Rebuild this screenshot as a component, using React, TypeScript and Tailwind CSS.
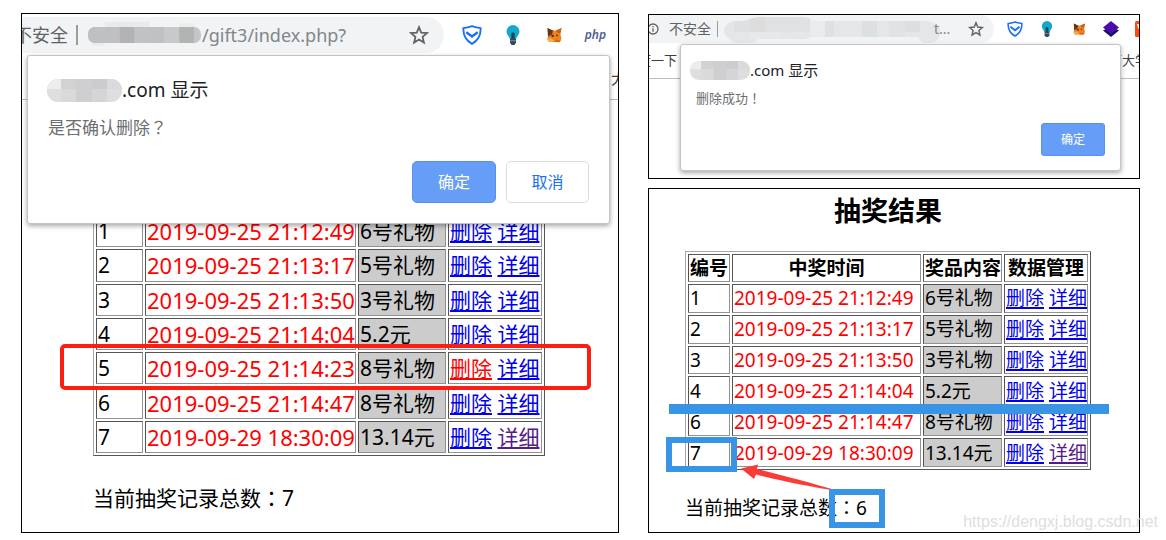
import type { ReactNode } from 'react';
import clsx from 'clsx';

type PrizeRecord = {
  id: number;
  time: string;
  prize: string;
  active?: boolean;
  visited?: boolean;
};

const records: PrizeRecord[] = [
  { id: 1, time: '2019-09-25 21:12:49', prize: '6号礼物' },
  { id: 2, time: '2019-09-25 21:13:17', prize: '5号礼物' },
  { id: 3, time: '2019-09-25 21:13:50', prize: '3号礼物' },
  { id: 4, time: '2019-09-25 21:14:04', prize: '5.2元' },
  { id: 5, time: '2019-09-25 21:14:23', prize: '8号礼物', active: true },
  { id: 6, time: '2019-09-25 21:14:47', prize: '8号礼物' },
  { id: 7, time: '2019-09-29 18:30:09', prize: '13.14元', visited: true },
];

const remaining = records.filter((record) => record.id !== 5);

function StarIcon({ className }: { className: string }) {
  return (
    <svg className={className} viewBox="0 0 20 20" fill="none" stroke="#5f6368" strokeWidth="1.8">
      <path d="M10 2.2l2.2 5.4 5.8.5-4.4 3.8 1.3 5.7-4.9-3-4.9 3 1.3-5.7L2 8.1l5.8-.5z" />
    </svg>
  );
}

function ShieldIcon({ className }: { className: string }) {
  return (
    <svg className={className} viewBox="0 0 20 20" fill="none" stroke="#1a6ff5" strokeWidth="1.9">
      <path d="M10 1.2c3 1.100 5.500 1.700 8.600 1.900.3 6.300-2.600 12.400-8.600 15.700C4 15.500 1.100 9.400 1.400 3.100 4.500 2.900 7 2.300 10 1.200z" />
      <path d="M4.300 7.200L10 11.500l5.700-4.300" strokeWidth="2.400" />
    </svg>
  );
}

function BulbIcon({ className }: { className: string }) {
  return (
    <svg className={className} viewBox="0 0 20 20">
      <path d="M10 0a6.500 6.500 0 0 0-6.500 6.500c0 3.200 2.600 4.600 3.300 7.300h6.400c.7-2.700 3.300-4.100 3.300-7.300A6.500 6.500 0 0 0 10 0z" fill="#11a9cc" />
      <path d="M10 7.500a2 2 0 0 0-1.500 3.300L8 14h4l-.5-3.200A2 2 0 0 0 10 7.500z" fill="#24445c" />
      <path d="M7 13.500h6v4.300L11.500 20h-3L7 17.800z" fill="#34495e" />
      <path d="M7 15.700h6" stroke="#8aa0b0" strokeWidth=".8" />
    </svg>
  );
}

function FoxIcon({ className }: { className: string }) {
  return (
    <svg className={className} viewBox="0 0 20 20">
      <path d="M3.500 3l4.500 2.500h4L17.500 3l-1.200 5.500 1.200 5.500-2 3H5l-1.500-3.500L4 10z" fill="#ee8420" />
      <path d="M3.500 3L9 5.500l-1 4-4 2z" fill="#6b3512" />
      <path d="M17.500 3L12 5.500l1.500 2.500 3 .5z" fill="#c65f13" />
      <path d="M7 10.500l2.500-1 .5 2-2 .7zM12 9.500l2.500.7-1.800 1.500z" fill="#5b2d10" />
      <path d="M3 14l4-1 3 2.500-2 1.500H4.500z" fill="#f6ab57" />
      <path d="M12 14.500l5 1-1.500 1.700-5-.2z" fill="#d56a15" />
    </svg>
  );
}

function LayersIcon({ className }: { className: string }) {
  return (
    <svg className={className} viewBox="0 0 16 16">
      <path d="M8 5.500l8 4-8 6.500-8-6.500z" fill="#1d0e63" />
      <path d="M8 0l8 6.500L8 13 0 6.500z" fill="#4a0cb0" />
    </svg>
  );
}

function RedIcon({ className }: { className: string }) {
  return (
    <svg className={className} viewBox="0 0 16 16">
      <rect width="16" height="16" rx="1.500" fill="#ff4713" />
      <path d="M2 3h8L7 9v5H5V9L3 7z" fill="#fff" />
      <path d="M5 4.500h3l-1 2z" fill="#ff4713" />
    </svg>
  );
}

function InfoIcon({ className }: { className: string }) {
  return (
    <svg className={className} viewBox="0 0 12 12" fill="none" stroke="#5f6368" strokeWidth="1.300">
      <circle cx="6" cy="6" r="5" />
      <path d="M6 5.200v3.500M6 3v1.200" />
    </svg>
  );
}

// Censored host names, drawn as pixelated strokes
function HostBlurLarge() {
  return (
    <svg className="h-[28px] w-[115px] shrink-0" viewBox="0 0 116 28">
      <path d="M18 1h45v5H18z" fill="#e9eaeb" />
      <path d="M93 2h15v4H93z" fill="#eceded" />
      <path d="M5 21h12v4H5z" fill="#e8edea" />
      <clipPath id="host-large">
        <rect x="1" y="6" width="114" height="16" rx="7" />
      </clipPath>
      <g clipPath="url(#host-large)">
        <rect width="116" height="28" fill="#c4c5c7" />
        <rect x="1" width="17" height="28" fill="#bec0c2" />
        <rect x="18" width="15" height="28" fill="#c0bfc1" />
        <rect x="33" width="15" height="28" fill="#b3b2b7" />
        <rect x="48" width="15" height="28" fill="#c0c2c5" />
        <rect x="63" width="15" height="28" fill="#bec2c5" />
        <rect x="78" width="15" height="28" fill="#c7caca" />
        <rect x="93" width="15" height="28" fill="#b2b4b2" />
      </g>
    </svg>
  );
}

function HostBlurWide() {
  return (
    <svg className="h-[28px] w-[217px] shrink-0" viewBox="0 0 217 28">
      <clipPath id="host-wide">
        <path d="M10 6h10q6-3 14-4h42q11 0 12 4h104q20-2 24 8v6q-2 8-12 8-8 0-10-6H86q-3 3-12 2H34q-3 4-10 4H12Q0 23 0 15q1-7 10-9z" />
      </clipPath>
      <g clipPath="url(#host-wide)">
        <rect width="217" height="28" fill="#e4e6e7" />
        <rect x="10" y="4" width="16" height="13" fill="#dee0e1" />
        <rect x="26" width="15" height="17" fill="#dcdcdd" />
        <rect x="41" width="15" height="17" fill="#e0e1e3" />
        <rect x="56" width="30" height="17" fill="#dfe1e2" />
        <rect x="26" y="17" width="30" height="11" fill="#e6e8e9" />
        <rect x="86" width="15" height="28" fill="#eaebed" />
        <rect x="101" width="9" height="28" fill="#dfe0e2" />
        <rect x="110" width="13" height="28" fill="#e5e6e8" />
        <rect x="138" width="15" height="28" fill="#dde0e2" />
        <rect x="165" width="16" height="28" fill="#e0e2e3" />
        <rect x="181" width="15" height="17" fill="#dcdfe0" />
      </g>
    </svg>
  );
}

function TitleBlur({ className, id }: { className: string; id: string }) {
  return (
    <svg className={className} viewBox="0 0 75 23" preserveAspectRatio="none">
      <clipPath id={id}>
        <rect width="75" height="23" rx="11" />
      </clipPath>
      <g clipPath={`url(#${id})`}>
        <rect width="75" height="23" fill="#dedee0" />
        <rect width="14" height="10" fill="#ededed" />
        <rect x="14" width="15" height="10" fill="#d3d2d3" />
        <rect x="29" width="16" height="23" fill="#cfced1" />
        <rect x="45" width="15" height="10" fill="#cccccf" />
        <rect x="14" y="10" width="15" height="13" fill="#dadadb" />
        <rect x="45" y="10" width="15" height="13" fill="#d5d5d8" />
        <rect x="60" width="15" height="10" fill="#d9dadb" />
      </g>
    </svg>
  );
}

// Full-width punctuation sits in the middle of its box in the TC face
function Mark({ children }: { children: ReactNode }) {
  return (
    <span lang="zh-TW" className="font-['Noto_Sans_CJK_TC',sans-serif] leading-none">
      {children}
    </span>
  );
}

function PrizeTable({ rows, large }: { rows: PrizeRecord[]; large?: boolean }) {
  const cell = 'whitespace-nowrap border border-t-[#555] border-r-[#929292] border-b-[#929292] border-l-[#555] p-px';
  const link = 'underline decoration-2 underline-offset-2';

  return (
    <table
      className={clsx(
        'table-fixed border-separate border-spacing-[2px] border border-t-[#a8a8a8] border-r-[#555] border-b-[#555] border-l-[#a8a8a8]',
        large ? 'h-[244px] w-[452px] text-[21px] leading-7' : 'h-[219px] w-[406px] text-[19px] leading-6',
      )}
    >
      <colgroup>
        <col className={large ? 'w-[47px]' : 'w-[42px]'} />
        <col className={large ? 'w-[211px]' : 'w-[189px]'} />
        <col className={large ? 'w-[88px]' : 'w-[79px]'} />
        <col />
      </colgroup>
      {!large && (
        <thead>
          <tr>
            <th className={cell}>编号</th>
            <th className={cell}>中奖时间</th>
            <th className={cell}>奖品内容</th>
            <th className={cell}>数据管理</th>
          </tr>
        </thead>
      )}
      <tbody>
        {rows.map((row) => (
          <tr key={row.id}>
            <td className={cell}>{row.id}</td>
            <td className={clsx(cell, 'text-[#ff0000]', large && 'text-[22px]')}>{row.time}</td>
            <td className={clsx(cell, 'bg-[#cccccc]')}>{row.prize}</td>
            <td className={cell}>
              <a href="#delete" className={clsx(link, row.active ? 'text-[#ff0000]' : 'text-[#0000ee]')}>
                删除
              </a>{' '}
              <a href="#detail" className={clsx(link, row.visited ? 'text-[#551a8b]' : 'text-[#0000ee]')}>
                详细
              </a>
            </td>
          </tr>
        ))}
      </tbody>
    </table>
  );
}

function Dialog({ className, children }: { className: string; children: ReactNode }) {
  return (
    <div
      role="dialog"
      className={clsx('absolute rounded-[3px] border border-[#c4c4c4] bg-white shadow-[0_2px_5px_rgba(0,0,0,0.35)]', className)}
    >
      {children}
    </div>
  );
}

function ConfirmPanel() {
  return (
    <section className="relative min-w-0 flex-[596] overflow-hidden border border-black bg-white">
      <div className="flex items-center pt-[3px] pr-3">
        <div className="flex h-9 min-w-0 flex-1 items-center rounded-r-full bg-[#f1f3f4] pr-[15px] text-[18px] leading-6 text-[#80868b]">
          <span className="-ml-2 shrink-0 text-[#5f6368]">不安全</span>
          <span className="ml-2 h-5 w-[2px] shrink-0 bg-[#9a9da0]" />
          <span className="ml-[9px] flex">
            <HostBlurLarge />
          </span>
          <span>/gift3/index.php?</span>
          <button type="button" aria-label="收藏" className="ml-auto">
            <StarIcon className="size-5" />
          </button>
        </div>
        <div className="ml-[18px] flex items-center gap-[21px]">
          <ShieldIcon className="size-5" />
          <BulbIcon className="size-5" />
          <FoxIcon className="size-5" />
          <span className="text-[12px] leading-5 font-semibold text-[#4f5b93] italic">php</span>
        </div>
      </div>
      <div className="flex h-[47px] items-center border-b border-[#bdbdbd] pt-1 text-[15px] text-[#3c4043]">
        <span className="ml-auto w-[22px] whitespace-nowrap">南大学</span>
      </div>

      <div className="px-[71px] pt-[112px] pb-[19px]">
        <div className="relative w-[452px]">
          <PrizeTable rows={records} large />
          <div className="absolute top-[132px] left-[-33px] h-[46px] w-[531px] rounded-[5px] border-4 border-[#fb1e12]" />
        </div>
        <p className="mt-7 text-[21px] leading-7">
          当前抽奖记录总数<Mark>：</Mark>7
        </p>
      </div>

      <Dialog className="top-[41px] right-2 left-[5px] px-5 pt-[20px] pb-5">
        <h2 className="flex items-center text-[19px] leading-7 text-[#202124]">
          <TitleBlur id="title-large" className="-ml-px h-[23px] w-[75px]" />
          .com 显示
        </h2>
        <p className="mt-3 text-[17px] leading-6 text-[#6b6e72]">
          是否确认删除<Mark>？</Mark>
        </p>
        <div className="mt-[21px] flex justify-end gap-2.5 text-[16px] leading-6">
          <button type="button" className="h-[42px] w-[84px] rounded-[5px] border border-[#5590f3] bg-[#669df6] text-white">
            确定
          </button>
          <button type="button" className="h-[42px] w-[83px] rounded-[5px] border border-[#dadce0] bg-white text-[#1a73e8]">
            取消
          </button>
        </div>
      </Dialog>
    </section>
  );
}

function SuccessPanel() {
  return (
    <section className="relative h-[165px] overflow-hidden border border-black bg-white">
      <div className="flex items-center">
        <div className="flex h-7 min-w-0 flex-1 items-center rounded-r-full bg-[#f1f3f4] pr-2.5 text-[14px] leading-5 text-[#80868b]">
          <InfoIcon className="-ml-[2px] size-3 shrink-0" />
          <span className="ml-2.5 shrink-0 text-[#5f6368]">不安全</span>
          <span className="ml-1.5 h-4 w-px shrink-0 bg-[#9a9da0]" />
          <span className="ml-1.5 flex">
            <HostBlurWide />
          </span>
          <span className="-ml-[7px]">t...</span>
          <button type="button" aria-label="收藏" className="ml-auto">
            <StarIcon className="size-4" />
          </button>
        </div>
        <div className="ml-[13px] flex w-[132px] items-center gap-4 overflow-hidden">
          <ShieldIcon className="size-4 shrink-0" />
          <BulbIcon className="size-4 shrink-0" />
          <FoxIcon className="size-4 shrink-0" />
          <LayersIcon className="size-4 shrink-0" />
          <RedIcon className="size-4 shrink-0" />
        </div>
      </div>
      <div className="flex h-[36px] items-center justify-between border-b border-[#bdbdbd] text-[13px] text-[#3c4043]">
        <span className="-ml-[11px]">度一下</span>
        <span className="w-[30px] whitespace-nowrap">南大学</span>
      </div>

      <Dialog className="top-[29px] right-[18px] left-[31px] px-[15px] pt-[15px] pb-[14px]">
        <h2 className="flex items-center text-[15px] leading-5 text-[#202124]">
          <TitleBlur id="title-small" className="-ml-[6px] h-[19px] w-[60px]" />
          .com 显示
        </h2>
        <p className="mt-2 text-[13px] leading-5 text-[#6b6e72]">
          删除成功<Mark>！</Mark>
        </p>
        <div className="mt-[15px] flex justify-end">
          <button type="button" className="h-[33px] w-16 rounded-[3px] border border-[#5590f3] bg-[#669df6] text-[12px] leading-5 text-white">
            确定
          </button>
        </div>
      </Dialog>
    </section>
  );
}

function ResultPanel() {
  return (
    <section className="flex-1 border border-black bg-white px-9 pt-1.5">
      <h1 className="w-[406px] text-center text-[27px] leading-8 font-bold">抽奖结果</h1>
      <div className="relative mt-6 w-[406px]">
        <PrizeTable rows={remaining} />
        <p className="mt-6 text-[19px] leading-7">
          当前抽奖记录总数<Mark>：</Mark>6
        </p>

        <div className="absolute top-[153px] left-[-16px] h-2.5 w-[440px] bg-[#3994e6]" />
        <div className="absolute top-[186px] left-[-19px] h-[35px] w-[71px] border-6 border-[#3994e6]" />
        <svg className="absolute top-[209px] left-[51px] h-9 w-28" viewBox="0 0 112 36">
          <path d="M5 8.500L22 4.500l-1 4.500C45 15 76 23 104 31.500 76 27 45 21 20 14.500L18 19z" fill="#fb3b37" />
        </svg>
        <div className="absolute top-[238px] left-[144px] h-[39px] w-14 border-6 border-[#3994e6]" />
      </div>
    </section>
  );
}

export default function App() {
  return (
    <main className="relative flex min-h-screen gap-[29px] bg-white pt-[13px] pr-[26px] pb-[7px] pl-[21px] font-['Noto_Sans','Noto_Sans_CJK_SC',sans-serif] text-black">
      <ConfirmPanel />
      <div className="flex min-w-0 flex-[492] flex-col gap-[9px] pt-px">
        <SuccessPanel />
        <ResultPanel />
      </div>
      <span className="absolute right-2 bottom-1.5 font-['Liberation_Sans',sans-serif] text-[16px] leading-6 text-[#dedede]">
        https://dengxj.blog.csdn.net
      </span>
    </main>
  );
}
